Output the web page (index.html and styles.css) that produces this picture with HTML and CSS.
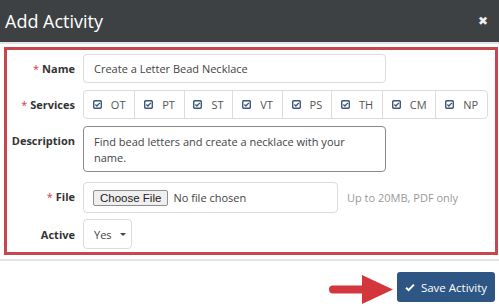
FILE: index.html
```html
<!DOCTYPE html>
<html>
<head>
    <title>Add Activity</title>
    <link rel="stylesheet" href="styles.css">
</head>
<body>
    <div class="modal">
        <div class="modal-header">
            <span class="modal-title">Add Activity</span>
            <span class="close">&#10006;</span>
        </div>

        <div class="modal-body">
            <div class="form-box">
                <label class="label"><span class="req">*</span>Name</label>
                <div class="field">
                    <div class="input name-input">Create a Letter Bead Necklace</div>
                </div>

                <label class="label"><span class="req">*</span>Services</label>
                <div class="field">
                    <div class="btn-group">
                        <span class="seg"><svg class="chk" viewBox="0 0 10 10"><rect x="0.75" y="0.75" width="8.5" height="8.5" rx="1.5"/><path d="M2.6 5.1 L4.3 6.7 L7.6 3.2"/></svg>OT</span>
                        <span class="seg"><svg class="chk" viewBox="0 0 10 10"><rect x="0.75" y="0.75" width="8.5" height="8.5" rx="1.5"/><path d="M2.6 5.1 L4.3 6.7 L7.6 3.2"/></svg>PT</span>
                        <span class="seg"><svg class="chk" viewBox="0 0 10 10"><rect x="0.75" y="0.75" width="8.5" height="8.5" rx="1.5"/><path d="M2.6 5.1 L4.3 6.7 L7.6 3.2"/></svg>ST</span>
                        <span class="seg"><svg class="chk" viewBox="0 0 10 10"><rect x="0.75" y="0.75" width="8.5" height="8.5" rx="1.5"/><path d="M2.6 5.1 L4.3 6.7 L7.6 3.2"/></svg>VT</span>
                        <span class="seg"><svg class="chk" viewBox="0 0 10 10"><rect x="0.75" y="0.75" width="8.5" height="8.5" rx="1.5"/><path d="M2.6 5.1 L4.3 6.7 L7.6 3.2"/></svg>PS</span>
                        <span class="seg"><svg class="chk" viewBox="0 0 10 10"><rect x="0.75" y="0.75" width="8.5" height="8.5" rx="1.5"/><path d="M2.6 5.1 L4.3 6.7 L7.6 3.2"/></svg>TH</span>
                        <span class="seg"><svg class="chk" viewBox="0 0 10 10"><rect x="0.75" y="0.75" width="8.5" height="8.5" rx="1.5"/><path d="M2.6 5.1 L4.3 6.7 L7.6 3.2"/></svg>CM</span>
                        <span class="seg"><svg class="chk" viewBox="0 0 10 10"><rect x="0.75" y="0.75" width="8.5" height="8.5" rx="1.5"/><path d="M2.6 5.1 L4.3 6.7 L7.6 3.2"/></svg>NP</span>
                    </div>
                </div>

                <label class="label label-top">Description</label>
                <div class="field">
                    <div class="textarea">Find bead letters and create a necklace with your name.</div>
                </div>

                <label class="label"><span class="req">*</span>File</label>
                <div class="field file-row">
                    <div class="input file-input">
                        <span class="file-btn">Choose File</span>
                        <span class="file-none">No file chosen</span>
                    </div>
                    <span class="help">Up to 20MB, PDF only</span>
                </div>

                <label class="label">Active</label>
                <div class="field">
                    <div class="input select">Yes <span class="caret"></span></div>
                </div>
            </div>
        </div>

        <div class="modal-footer">
            <svg class="arrow" width="64" height="29" viewBox="0 0 64 29">
                <line x1="4" y1="14.5" x2="36" y2="14.5"/>
                <polygon points="33,0 64,14.5 33,29"/>
            </svg>
            <span class="save-btn">
                <svg class="save-chk" viewBox="0 0 12 10"><path d="M1.3 5.3 L4.3 8.1 L10.7 1.6"/></svg>
                Save Activity
            </span>
        </div>
    </div>
</body>
</html>
```

FILE: styles.css
```css
body {
    margin: 0;
    background-color: #fff;
    font-family: "Open Sans", "Liberation Sans", sans-serif;
    color: #333;
}

.modal {
    width: 499px;
    height: 306px;
    overflow: hidden;
}

.modal-header {
    height: 42px;
    background-color: #3e4144;
    border-bottom: 2px solid #e4e4e4;
    display: flex;
    justify-content: space-between;
    align-items: center;
    padding: 0 11px 0 5px;
}

.modal-title {
    color: #fff;
    font-size: 18px;
}

.close {
    color: #eee;
    font-size: 12px;
    font-weight: bold;
    font-family: "DejaVu Sans", sans-serif;
}

.modal-body {
    padding: 3px 1px 2px 4px;
}

.form-box {
    border: 3px solid #c8474c;
    padding: 4px 0 3px 0;
    display: grid;
    grid-template-columns: 68px 1fr;
    column-gap: 8px;
    row-gap: 7px;
    align-items: center;
}

.label {
    text-align: right;
    font-weight: bold;
    font-size: 11px;
    color: #333;
}

.label-top {
    align-self: start;
    padding-top: 7px;
}

.req {
    color: #d0393e;
    margin-right: 3px;
    font-weight: normal;
}

.input {
    height: 29px;
    box-sizing: border-box;
    border: 1px solid #dcdcdc;
    border-radius: 4px;
    font-size: 11px;
    color: #444;
    display: flex;
    align-items: center;
}

.name-input {
    width: 303px;
    padding-left: 10px;
}

.btn-group {
    display: flex;
    width: 405px;
    height: 29px;
    box-sizing: border-box;
    border: 1px solid #dcdcdc;
    border-radius: 4px;
}

.seg {
    flex: 1 1 auto;
    display: flex;
    align-items: center;
    justify-content: center;
    font-size: 11px;
    color: #555;
    border-left: 1px solid #dcdcdc;
}

.seg:first-child {
    border-left: none;
}

.chk {
    width: 9px;
    height: 9px;
    margin-right: 9px;
    fill: none;
    stroke: #3e5878;
    stroke-width: 1.6;
}

.textarea {
    width: 303px;
    height: 46px;
    box-sizing: border-box;
    border: 1px solid #8a8a8a;
    border-radius: 4px;
    padding: 7px 10px;
    font-size: 11px;
    line-height: 16px;
    color: #444;
}

.file-row {
    display: flex;
    align-items: center;
    margin-top: 3px;
}

.file-input {
    width: 255px;
    height: 31px;
    padding-left: 9px;
}

.file-btn {
    font-family: "Liberation Sans", Arial, sans-serif;
    font-size: 11.5px;
    color: #222;
    background-color: #efefef;
    border: 1px solid #8f8f8f;
    border-radius: 2px;
    padding: 1px 6px;
    margin-right: 5px;
}

.file-none {
    color: #444;
}

.help {
    margin-left: 9px;
    font-size: 11px;
    color: #999;
}

.select {
    width: 49px;
    height: 30px;
    padding-left: 10px;
    margin-top: -1px;
}

.caret {
    display: inline-block;
    margin-left: 8px;
    border-left: 3px solid transparent;
    border-right: 3px solid transparent;
    border-top: 3px solid #444;
}

.modal-footer {
    margin-top: 2px;
    border-top: 2px solid #e4e4e4;
    display: flex;
    justify-content: flex-end;
    align-items: center;
    padding: 9px 4px 0 0;
}

.arrow {
    margin-right: 4px;
    margin-top: 5px;
}

.arrow line {
    stroke: #d3373c;
    stroke-width: 8;
    stroke-linecap: round;
}

.arrow polygon {
    fill: #d3373c;
}

.save-btn {
    width: 98px;
    height: 30px;
    box-sizing: border-box;
    background-color: #2d5684;
    border-radius: 3px;
    color: #fff;
    font-size: 11.5px;
    display: flex;
    align-items: center;
    justify-content: center;
}

.save-chk {
    width: 10px;
    height: 9px;
    margin-right: 6px;
    fill: none;
    stroke: #fff;
    stroke-width: 2.4;
}
```
